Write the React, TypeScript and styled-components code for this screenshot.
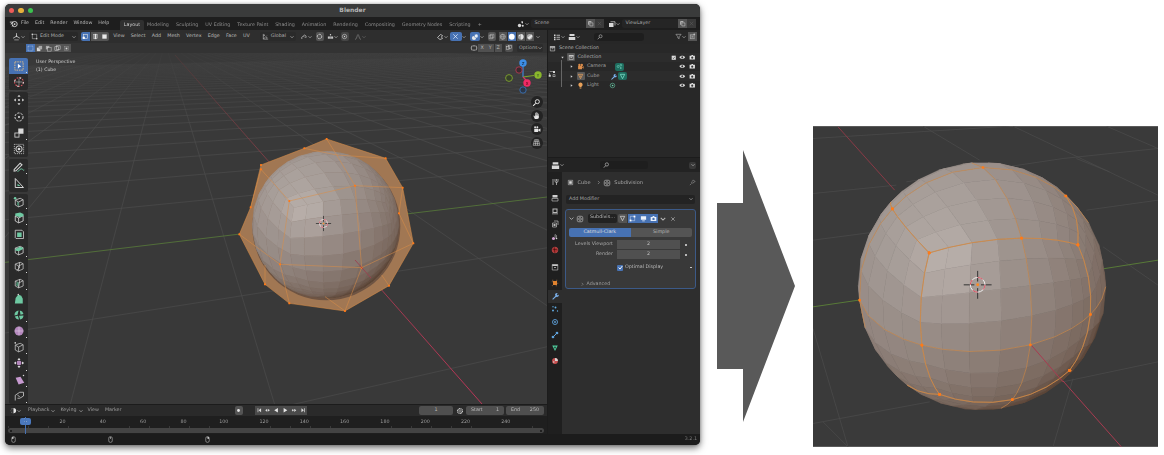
import React from "react";
import styled, { createGlobalStyle } from "styled-components";

const Global = createGlobalStyle`
  html, body { margin: 0; padding: 0; background: #fff; }
  #root { width: 1164px; height: 455px; overflow: hidden; }
  * { box-sizing: border-box; }
`;

/* ---------- page ---------- */
const Page = styled.div`
  display: flex; align-items: flex-start; width: 1164px; height: 455px; overflow: hidden;
  padding: 4px 0 0 5px; background: #fff;
  font-family: "DejaVu Sans", "Liberation Sans", sans-serif; text-rendering: geometricPrecision;
`;
const Window = styled.div`
  flex: none; width: 695px; height: 441px; display: flex; flex-direction: column; overflow: hidden;
  background: #1c1c1c; border-radius: 5px; box-shadow: 0 3px 7px rgba(0,0,0,.55), 0 0 3px rgba(0,0,0,.25);
  filter: blur(.38px); font-size: 4.8px; color: #bcbcbc; white-space: nowrap;
`;
const ArrowBox = styled.svg` flex: none; width: 78px; height: 272px; margin: 146px 0 0 17px; display: block; `;
const Picture = styled.svg` flex: none; width: 345px; height: 321px; margin: 122px 0 0 18px; display: block; filter: blur(.25px); `;

/* ---------- title + topbar ---------- */
const TitleBar = styled.div`
  flex: none; height: 13px; background: #3a3b3b; display: grid; grid-template-columns: 60px 1fr 60px; align-items: center;
`;
const Lights = styled.div` display: flex; gap: 4px; padding-left: 4px; `;
const Light = styled.span<{ $c: string }>` width: 5.4px; height: 5.4px; border-radius: 50%; background: ${p => p.$c}; `;
const Title = styled.div` text-align: center; font-size: 6px; font-weight: 700; color: #b5b5b5; `;
const TopBar = styled.div` flex: none; height: 13px; background: #1e1e1e; display: flex; align-items: center; padding-left: 4px; position: relative; `;
const MenuRow = styled.div<{ $gap: number; $ml?: number }>` display: flex; align-items: center; gap: ${p => p.$gap}px; margin-left: ${p => p.$ml ?? 0}px; `;
const Tabs = styled.div` display: flex; align-items: stretch; height: 10px; margin: 3px 0 0 11px; align-self: flex-start; `;
const Tab = styled.div<{ $on?: boolean }>`
  padding: 0 3.5px; display: flex; align-items: center; border-radius: 2px 2px 0 0; color: ${p => p.$on ? "#d0d0d0" : "#8e8e8e"}; background: ${p => p.$on ? "#303030" : "transparent"};
`;
const Spacer = styled.div` flex: 1; `;
const SceneField = styled.div<{ $w: number }>`
  width: ${p => p.$w}px; height: 9px; background: #252525; border-radius: 2px 0 0 2px; padding-left: 3.5px; display: flex; align-items: center; color: #a8a8a8;
`;
const SquareBtn = styled.div<{ $bg?: string; $w?: number; $h?: number; $r?: string }>`
  flex: none; width: ${p => p.$w ?? 9}px; height: ${p => p.$h ?? 9}px; background: ${p => p.$bg ?? "#545454"}; border-radius: ${p => p.$r ?? "0"};
  display: flex; align-items: center; justify-content: center;
`;
const Cluster = styled.div<{ $ml?: number; $gap?: number; $mr?: number }>`
  display: flex; align-items: center; gap: ${p => p.$gap ?? 0}px; margin-left: ${p => p.$ml ?? 0}px; margin-right: ${p => p.$mr ?? 0}px;
`;

/* ---------- main ---------- */
const Main = styled.div` flex: 1; min-height: 0; display: flex; gap: 1px; `;
const LeftCol = styled.div` width: 542px; display: flex; flex-direction: column; gap: 1px; `;
const RightCol = styled.div` flex: 1; display: flex; flex-direction: column; gap: 1px; `;
const Viewport = styled.div` flex: 1; position: relative; display: flex; flex-direction: column; background: #393939; overflow: hidden; `;
const SceneSvg = styled.svg` position: absolute; inset: 0; width: 542px; height: 374px; display: block; `;
const Bar = styled.div<{ $h: number; $bg: string }>`
  position: relative; flex: none; height: ${p => p.$h}px; background: ${p => p.$bg}; display: flex; align-items: center;
`;
const Drop = styled.div<{ $w: number; $ml?: number; $bg?: string }>`
  flex: none; width: ${p => p.$w}px; height: 9px; margin-left: ${p => p.$ml ?? 0}px; background: ${p => p.$bg ?? "#282828"}; border-radius: 2px;
  display: flex; align-items: center; gap: 2px; padding: 0 2px; color: #b0b0b0;
`;
const DropText = styled.span` flex: 1; `;
const Stage = styled.div` position: relative; flex: 1; display: flex; padding: 5px 4px 0 4px; min-height: 0; `;
const Tools = styled.div` flex: none; width: 19px; display: flex; flex-direction: column; gap: 2px; `;
const ToolGroup = styled.div` display: flex; flex-direction: column; border-radius: 2px; overflow: hidden; `;
const Tool = styled.div<{ $on?: boolean }>`
  height: 16.2px; background: ${p => p.$on ? "#4772b3" : "#2a2a2a"}; display: flex; align-items: center; justify-content: center; position: relative;
`;
const Corner = styled.span` position: absolute; right: 1px; bottom: 1px; width: 1px; height: 1px; background: #ddd; `;
const Info = styled.div` margin: 1px 0 0 8px; line-height: 8px; color: #cfcfcf; font-size: 4.7px; `;
const NavCol = styled.div`
  margin: 38px -1px 0 auto; width: 15px; display: flex; flex-direction: column; align-items: center; gap: 1.6px;
`;
const NavBtn = styled.div` width: 12px; height: 12px; border-radius: 50%; background: #232323; display: flex; align-items: center; justify-content: center; `;
const OptionsBtn = styled.div` flex: none; width: 26px; height: 8.5px; background: #2c2c2c; border-radius: 2px; display: flex; align-items: center; justify-content: space-between; padding: 0 2px 0 2px; color: #a8a8a8; `;

/* ---------- timeline ---------- */
const Timeline = styled.div` flex: none; height: 29px; display: flex; flex-direction: column; background: #1f1f1f; position: relative; overflow: hidden; `;
const TimeHead = styled.div` flex: none; height: 11px; background: #2a2a2a; display: flex; align-items: center; padding-left: 5px; color: #9e9e9e; `;
const TimeField = styled.div<{ $w: number; $ml?: number; $split?: boolean }>`
  flex: none; width: ${p => p.$w}px; height: 8.5px; background: #4f4f4f; border-radius: 2px; margin-left: ${p => p.$ml ?? 0}px; padding: 0 5px; display: flex; align-items: center;
  justify-content: ${p => p.$split ? "space-between" : "center"}; color: #bbb;
`;
const Ruler = styled.div`
  flex: none; height: 12px; display: flex; padding: 4px 0 0 37.4px; position: relative; color: #9c9c9c; align-items: flex-start;
  background: repeating-linear-gradient(90deg, #3a3a3a 0, #3a3a3a .7px, transparent .7px, transparent 20.15px) 3.4px 100% / 100% 2px no-repeat;
`;
const Mark = styled.div` flex: none; width: 40.3px; text-align: center; `;
const Handle = styled.div`
  position: absolute; left: 15px; top: 1.5px; width: 11px; height: 7.5px; border-radius: 2px; background: #4a78bd; color: #e4e4e4; text-align: center; line-height: 7.5px;
`;
const Playhead = styled.div` position: absolute; left: 20px; top: 12px; width: 1px; height: 17px; background: #4772b3; `;
const Scrollbar = styled.div` flex: none; height: 5px; margin: 0 3px; background: #444; border-radius: 3px; display: flex; align-items: center; justify-content: space-between; padding: 0 2px; `;
const Pip = styled.span` width: 2px; height: 2px; border-radius: 50%; background: #151515; `;
const Status = styled.div` flex: none; height: 11px; display: flex; align-items: center; padding: 0 3px 0 4.5px; background: #1c1c1c; color: #7e7e7e; `;
const MouseGap = styled.div<{ $w: number }>` flex: none; width: ${p => p.$w}px; `;

/* ---------- outliner ---------- */
const Outliner = styled.div` flex: none; height: 127px; background: #282828; position: relative; `;
const OutHead = styled.div` height: 13.5px; background: #272727; display: flex; align-items: center; `;
const Search = styled.div<{ $w: number; $ml: number }>`
  flex: none; width: ${p => p.$w}px; margin-left: ${p => p.$ml}px; height: 8px; background: #1e1e1e; border-radius: 3px; display: flex; align-items: center; padding-left: 3px;
`;
const Row = styled.div<{ $level: number; $stripe?: boolean }>`
  height: 9.3px; display: flex; align-items: center; padding: 0 5px 0 ${p => p.$level * 9.5}px; background: ${p => p.$stripe ? "#2c2c2c" : "transparent"}; color: ${p => p.$level === 2 ? "#a0a0a0" : "#b2b2b2"};
`;
const RowSlot = styled.span` flex: none; width: 9px; display: flex; justify-content: center; align-items: center; `;
const RowLabel = styled.span` margin-left: 2px; `;
const TreeLine = styled.span` position: absolute; left: 13px; top: 30px; width: .7px; height: 27px; background: #666; `;
const ModeMark = styled.span` position: absolute; left: 0px; top: 40px; display: flex; `;

/* ---------- properties ---------- */
const Props = styled.div` flex: 1; display: flex; flex-direction: column; background: #2e2e2e; min-height: 0; `;
const PropHead = styled.div` flex: none; height: 14px; background: #232323; display: flex; align-items: center; `;
const PropBody = styled.div` flex: 1; display: flex; min-height: 0; `;
const TabCol = styled.div` flex: none; width: 14px; background: #1f1f1f; display: flex; flex-direction: column; align-items: center; padding-top: 3.5px; `;
const PropTab = styled.div<{ $on?: boolean; $gap?: number }>`
  width: 14px; height: 13px; margin-bottom: ${p => p.$gap ?? 0}px; display: flex; align-items: center; justify-content: center; background: ${p => p.$on ? "#2e2e2e" : "transparent"};
`;
const PropMain = styled.div` flex: 1; padding: 5px 4px 0 3px; display: flex; flex-direction: column; `;
const Crumb = styled.div` height: 9px; display: flex; align-items: center; gap: 2px; padding-left: 2px; margin-top: 1px; font-size: 5px; color: #a8a8a8; `;
const AddMod = styled.div` height: 8.5px; margin: 8px 1px 0 1px; background: #232323; border-radius: 2px; display: flex; align-items: center; justify-content: space-between; padding: 0 2px 0 3px; color: #a8a8a8; `;
const Panel = styled.div`
  margin-top: 5px; height: 80px; background: #393939; border: 1px solid #3c5a88; border-radius: 3px; padding: 4px 3px 0 3px; display: flex; flex-direction: column;
`;
const PanelHead = styled.div` height: 10px; display: flex; align-items: center; `;
const NameField = styled.div` width: 29px; height: 8.5px; margin-left: 4px; background: #222; border-radius: 2px; text-align: center; line-height: 8.5px; color: #bbb; `;
const Seg = styled.div` display: flex; height: 9px; margin-top: 4.5px; border-radius: 2px; overflow: hidden; `;
const SegBtn = styled.div<{ $on?: boolean }>` flex: 1; background: ${p => p.$on ? "#4772b3" : "#545454"}; color: ${p => p.$on ? "#ddd" : "#b5b5b5"}; text-align: center; line-height: 9px; `;
const FieldRow = styled.div<{ $mt?: number }>` height: 9.3px; margin-top: ${p => p.$mt ?? .8}px; display: flex; align-items: center; `;
const FieldLabel = styled.div` width: 44px; text-align: right; padding-right: 0; color: #a8a8a8; `;
const Num = styled.div` width: 63px; height: 9.3px; margin-left: 4px; background: #505050; text-align: center; line-height: 9.3px; color: #c0c0c0; `;
const Dot = styled.span` flex: none; width: 1.8px; height: 1.8px; border-radius: 50%; background: #ddd; margin-left: 5px; `;
const Check = styled.span` flex: none; width: 6px; height: 6px; border-radius: 1px; background: #4772b3; margin-left: 48px; display: flex; align-items: center; justify-content: center; `;
const CheckLabel = styled.span` margin-left: 2px; color: #b8b8b8; flex: 1; `;
const Advanced = styled.div` margin-top: 9.5px; display: flex; align-items: center; gap: 2px; padding-left: 11px; color: #9f9f9f; `;

/* ---------- icon drawings ---------- */
const G = "#6ec9a2";
const W = "#d8d8d8";
const cube = "M3 5.5 9.5 3 13.5 5v7L7.5 14.5 3 12Z M3 5.5 7.5 8 13.5 5 M7.5 8v6.5";
const S = (d: string, c = W, w = 1.2, extra: object = {}) => <path d={d} fill="none" stroke={c} strokeWidth={w} {...extra} />;
const F = (d: string, c = W) => <path d={d} fill={c} />;

const ICONS: Record<string, React.ReactNode> = {
  select: <>{<rect x="2.5" y="2.5" width="11" height="11" fill="none" stroke="#d9b98a" strokeWidth="1.3" strokeDasharray="2 1.2" />}{F("M6.5 5v6.5l1.8-1.7L11 8.5Z", "#fff")}</>,
  cursor: <><circle cx="8" cy="8" r="5.8" fill="none" stroke="#e0555f" strokeWidth="1.4" strokeDasharray="2.3 1.6" /><circle cx="8" cy="8" r="5.8" fill="none" stroke="#ddd" strokeWidth="1.4" strokeDasharray="2.3 6.8" />{S("M8 3.5v9M3.5 8h9", "#aaa", .9)}</>,
  move: <>{F("M8 1 10 3.8H6Z M8 15 10 12.2H6Z M1 8 3.8 6V10Z M15 8 12.2 6V10Z")}<circle cx="8" cy="8" r="1.3" fill={W} /></>,
  rotate: <><circle cx="8" cy="8" r="5.4" fill="none" stroke={W} strokeWidth="1.3" strokeDasharray="3 1.5" /><circle cx="8" cy="8" r="1.4" fill={W} /></>,
  scale: <>{F("M7 2h7v7H7Z")}<rect x="2.5" y="8" width="5.5" height="5.5" fill="#2a2a2a" stroke={W} strokeWidth="1.1" /></>,
  transform: <><rect x="1.8" y="1.8" width="12.4" height="12.4" fill="none" stroke={W} strokeWidth="1" strokeDasharray="1.5 1.2" /><circle cx="8" cy="8" r="4.2" fill="none" stroke={W} strokeWidth="1.3" /><circle cx="8" cy="8" r="1.8" fill={W} /></>,
  annotate: <>{S("M1.5 11.5 9.5 3l2.5 2-8 8-2.5.5Z", W, 1.4)}{S("M6 14c2.5 0 2.5-3.5 5-3.5S13 13 15 12", G, 1.3)}</>,
  measure: <>{S("M3 2v12h11L3 2Z", W, 1.3)}{F("M6 9 6 12 10 12 Z", G)}</>,
  addcube: <>{S(cube, W, 1)}{F("M5.5 7.5 8 9v4.5L5.5 12Z", "#4c8a70")}<circle cx="2.8" cy="3" r="1.7" fill={G} /></>,
  extrude: <>{S(cube, W, 1.1)}{F("M3 2 9.5 .6 14 2.6v2.6L9 7 3 5Z", G)}</>,
  inset: <>{S("M3 3h9l2 2v9H4l-1-1Z", W, 1)}{F("M5.5 6h6v6h-6Z", G)}</>,
  bevel: <>{S(cube, W, 1)}{F("M3 7 9 3.5 13.5 5 13 7 7.5 9.5 3 8.5Z", G)}</>,
  loop: <>{S(cube, W, .9)}{S("M8.5 3.2v7.5L5 14", W, 1)}</>,
  knife: <>{S(cube, W, .9)}{F("M5 5.5 8 7.5 7 13 4 11Z", "#4c8a70")}{S("M9 3 7.5 14", W, 1)}</>,
  poly: <>{F("M7 2 11 3.5 13 7.5V14H2.5l1-7.5Z", G)}<circle cx="7" cy="2" r="1" fill={W} /></>,
  spin: <>{F("M7.5 2A6 6 0 0 0 2 8.5l4-1Z M9 2a6 6 0 0 1 5 4.5l-4 1Z M14 8.5A6 6 0 0 1 9.5 14L8 9Z M8 14A6 6 0 0 1 2.5 10L6.5 9Z", G)}</>,
  smooth: <><circle cx="8" cy="8" r="6" fill="#b487bd" />{S("M2 8h12M8 2v12", "#e5d2e8", .7)}</>,
  slide: <>{S(cube, W, .9)}<circle cx="3" cy="2.5" r="1.1" fill={W} /></>,
  shrink: <>{F("M8 1 10 4H6Z M8 15 10 12H6Z M1 8 4 6V10Z M15 8 12 6V10Z")}<circle cx="8" cy="8" r="3.2" fill="#b487bd" /></>,
  shear: <>{F("M3.5 5 10 3.5 15 11.5 7.5 14Z", "#c79ad0")}<circle cx="14" cy="2" r="1" fill={W} /></>,
  rip: <>{S("M3 14V7L9 3h5v5l-5 3H6", W, 1)}{S("M6 7 9 9", W, 1)}</>,
  blender: <><circle cx="10" cy="9" r="4.6" fill="none" stroke={W} strokeWidth="1.6" /><circle cx="10" cy="9" r="1.6" fill={W} />{S("M1.5 5.5h6M3 9l4-3M5 13 8 11", W, 1.5)}</>,
  axes: <>{S("M2 11 8 7.5 14 11M8 7.5V2", W, 1.3)}<circle cx="8" cy="7.5" r="1.4" fill={W} />{S("M4 14h8", W, 1)}</>,
  editmode: <>{S("M3 3h10v10H3Z", W, 1.1)}<rect x="1.5" y="1.5" width="3" height="3" fill={W} /><rect x="11.5" y="11.5" width="3" height="3" fill={W} /></>,
  vertex: <><rect x="3" y="3" width="10" height="10" fill="none" stroke="#e8e8e8" strokeWidth="1.3" /><rect x="1.5" y="8.5" width="5" height="5" fill="#fff" /></>,
  edge: <><rect x="3" y="3" width="10" height="10" fill="none" stroke="#cfcfcf" strokeWidth="1.1" /><rect x="6" y="2" width="4" height="12" fill="#e8e8e8" /></>,
  face: <>{F("M3 3h10v10H3Z", "#e8e8e8")}{S("M3 3h10", "#888", 1)}</>,
  sel2: <><rect x="2.5" y="2.5" width="11" height="11" fill="none" stroke="#e6eef9" strokeWidth="1" strokeDasharray="2 1" /></>,
  sel3: <>{F("M2 6h8v8H2Z")}{F("M6 2h8v8H6Z", "#aaa")}</>,
  sel4: <>{F("M2 2h8v8H2Z", "#aaa")}<rect x="6" y="6" width="8" height="8" fill="#555" stroke={W} strokeWidth="1" /></>,
  sel5: <><rect x="2" y="4" width="8" height="8" fill="none" stroke={W} strokeWidth="1.2" /><rect x="6" y="2" width="8" height="8" fill="none" stroke={W} strokeWidth="1.2" /></>,
  sel6: <><rect x="3" y="3" width="10" height="10" fill="none" stroke="#999" strokeWidth="1" /><rect x="6" y="6" width="4" height="4" fill={W} /></>,
  global: <>{S("M3 2v12h11", W, 1.2)}{S("M3 14 11 6", W, 1.1)}<circle cx="5" cy="5" r="1.3" fill={W} /><circle cx="11" cy="11" r="1.3" fill={W} /></>,
  link: <>{S("M4 12a3 3 0 1 1 5-4M7 5a3 3 0 1 1 4 5", W, 1.3)}</>,
  magnet: <><circle cx="8" cy="8" r="5" fill="none" stroke={W} strokeWidth="2" strokeDasharray="5 1.5" /></>,
  snapgrid: <>{F("M2 8h12v5H2Z")}{S("M5 8v5M8 8v5M11 8v5", "#333", .8)}<circle cx="8" cy="4" r="1.6" fill={W} /></>,
  circleDot: <><circle cx="8" cy="8" r="5" fill="none" stroke={W} strokeWidth="1.3" /><circle cx="8" cy="8" r="1.5" fill={W} /></>,
  curve: <>{S("M2 13C6 13 6 3 8 3s2 10 6 10", "#8a8a8a", 1.2)}</>,
  cursorSm: <>{S("M3 9 9 3l4 2-2 3 2 3-5 2Z", W, 1.5)}</>,
  gizmoToggle: <>{S("M3 13 13 3M3 3l10 10", "#e8f0ff", 1.6)}</>,
  overlay: <><circle cx="6" cy="10" r="4.2" fill="#e8e8e8" /><circle cx="10.5" cy="6" r="3.8" fill="#e8f0fb" stroke="#4772b3" strokeWidth="1" /></>,
  xray: <>{S("M2.5 5h8v8h-8Z M5.5 3h8v8h-8Z", "#d0d0d0", 1)}</>,
  wire: <><circle cx="8" cy="8" r="5.5" fill="none" stroke="#dcdcdc" strokeWidth="1" />{S("M2.5 8h11M8 2.5c-3 3-3 8 0 11M8 2.5c3 3 3 8 0 11", "#dcdcdc", .8)}</>,
  solid: <circle cx="8" cy="8" r="6.2" fill="#fff" />,
  material: <><circle cx="8" cy="8" r="6" fill="#9c9c9c" /><path d="M8 2a6 6 0 0 1 0 12Z" fill="#e0e0e0" /><circle cx="5.5" cy="5.5" r="1.5" fill="#eee" /></>,
  rendered: <><circle cx="8" cy="8" r="6" fill="#a8a8a8" /><path d="M3 10 12 3 14 7 7 14Z" fill="#e4e4e4" /></>,
  cameraview: <>{S("M3 4h10v8H3Z", W, 1)}{S("M8 2v2M8 12v2M1 8h2M13 8h2", W, 1)}</>,
  zoom: <><circle cx="9.5" cy="6.5" r="3.6" fill="none" stroke="#eee" strokeWidth="1.6" />{S("M6.5 9.5 2 14", "#eee", 1.8)}</>,
  hand: <>{F("M5 14 2.5 8.5l1.2-.6L5.5 10V3.2h1.1V8h.8V2.2h1.1V8h.8V3h1.1v5.3h.8V5h1v6c0 2-1 3-3 3Z", "#e6e6e6")}</>,
  camera: <>{F("M4 6.5h7v6H4Z M11.5 8 15 6v6l-3.5-2Z", "#e6e6e6")}<circle cx="5.5" cy="4" r="1.7" fill="#e6e6e6" /><circle cx="9.5" cy="4" r="1.7" fill="#e6e6e6" /></>,
  gridv: <>{S("M4.5 3h7l2.500 10h-12Z M7 3 6 13M9 3l1 10M3.800 6.500h8.400M3 10h10", "#e6e6e6", .9)}</>,
  mode: <>{S("M3 11V6M3 3h7", W, 1)}<rect x="1.5" y="9.5" width="4" height="4" fill={W} /><rect x="10" y="2" width="4" height="4" fill={W} /><rect x="10" y="9.5" width="4" height="4" fill="none" stroke={W} strokeWidth="1" /></>,
  outlinerEd: <>{F("M2 3h3v3H2Z")}{S("M7 4.5h7M7 8.5h7M7 12.5h7", W, 1.6)}{F("M2 7.5h3v3H2Z M2 11.5h3v3H2Z")}</>,
  displayEd: <>{F("M3 2h10v4H3Z M1.5 8h13v6h-13Z")}</>,
  searchI: <><circle cx="9.5" cy="6" r="4" fill="none" stroke="#c8c8c8" strokeWidth="1.5" />{S("M6.5 9 2 14", "#c8c8c8", 1.7)}</>,
  filter: <>{S("M2 3h12L9.5 8.5V13l-3-1.5v-3Z", "#c8c8c8", 1.2)}</>,
  newCol: <>{F("M2 3h11v11H2Z", "#9a9a9a")}{S("M5 6h6v5H5Z", "#3a3a3a", 1)}{S("M12 1v4M10 3h4", "#eee", 1.1)}</>,
  coll: <>{F("M2 3h12v3H2Z", "#e3e3e3")}{S("M3 6v7.5h10V6", "#e3e3e3", 1.2)}{F("M6 8h4v1.5H6Z", "#e3e3e3")}</>,
  cam: <><circle cx="5.5" cy="4.5" r="2.7" fill="#d98c4a" /><circle cx="11" cy="4.5" r="2.7" fill="#d98c4a" />{F("M2.5 7h9v7h-9Z M12 9l3-2v6l-3-2Z", "#d98c4a")}</>,
  tri: <>{S("M3 3 13 3 8 13Z", "#e8a15a", 1.7)}<circle cx="8" cy="7" r="1.4" fill="#e8a15a" /></>,
  bulb: <>{F("M8 1a4.8 4.8 0 0 0-2.4 9v2h4.8v-2A4.8 4.8 0 0 0 8 1Z M6 13h4v1.6H6Z", "#e8a15a")}</>,
  teal: <><circle cx="5" cy="8" r="2.3" fill="none" stroke="#7ee0c8" strokeWidth="1.2" /><circle cx="11" cy="5" r="2" fill="none" stroke="#7ee0c8" strokeWidth="1.2" /><circle cx="11" cy="11.5" r="1.8" fill="#7ee0c8" /></>,
  tealTri: <>{S("M3 3 13 3 8 13Z", "#7ee0c8", 1.8)}</>,
  wrenchB: <>{F("M2.5 14 9 7.5A3.2 3.2 0 0 1 13.5 3L11.5 5l1 1.5 1.6.2 1.3-1.6A3.6 3.6 0 0 1 10.5 9.5L4 15.5Z", "#7ab2ef")}</>,
  wrench: <>{F("M2.5 14 9 7.5A3.2 3.2 0 0 1 13.5 3L11.5 5l1 1.5 1.6.2 1.3-1.6A3.6 3.6 0 0 1 10.5 9.5L4 15.5Z", "#7aaee8")}</>,
  sun: <><circle cx="8" cy="8" r="5.2" fill="none" stroke="#6ed9b3" strokeWidth="1.2" /><path d="M6.5 5.5 11 8 6.5 10.5Z" fill="#6ed9b3" /></>,
  eye: <>{F("M1 8c3-5 11-5 14 0-3 5-11 5-14 0Z", "#e0e0e0")}<circle cx="8" cy="8" r="2.4" fill="#333" /></>,
  rcam: <>{F("M1.5 4.5h4l1-2h3l1 2h4v9h-13Z", "#e4e4e4")}<circle cx="8" cy="9" r="2.7" fill="#333" /></>,
  checked: <>{F("M2 2h12v12H2Z", "#dedede")}{S("M4.5 8 7 10.5 11.5 5", "#222", 1.6)}</>,
  tool: <>{S("M4 2v12M11 2v5M8 2v4a3 3 0 0 0 6 0V2M11 8v6", "#cfcfcf", 1.4)}</>,
  render: <>{F("M3 2h10v5H3Z", "#cfcfcf")}{S("M2 9h12v5H2Z", "#cfcfcf", 1.2)}</>,
  output: <>{F("M3 3h10v9H3Z", "#bbb")}{F("M5 5h6v5H5Z", "#222")}{F("M2 13h12v1.5H2Z", "#bbb")}</>,
  vlayer: <>{S("M3 6h8v8H3Z M6 2h8v8", "#bbb", 1.4)}{F("M5 8h4v4H5Z", "#bbb")}</>,
  scene: <><circle cx="5" cy="11" r="3" fill="#cfa3d0" />{S("M8 3l3 2v4l-3-1Z", "#d5d5d5", 1)}<circle cx="11" cy="11" r="1.6" fill="#d5d5d5" /></>,
  world: <><circle cx="8" cy="8" r="5.8" fill="#a33" stroke="#d85a5a" strokeWidth="1" />{S("M3 6c3 2 7 0 10 2M6 2c2 3 0 8 2 12", "#300", 1)}</>,
  collTab: <>{S("M2.5 3h11v11h-11Z", "#c8c8c8", 1.2)}{F("M2.5 3h11v3h-11Z M6 8h4v1.5H6Z", "#c8c8c8")}</>,
  object: <>{F("M4 4h8v8H4Z", "#e0822e")}{S("M2.5 2.5h11v11h-11Z", "#e8a060", 1.1, { strokeDasharray: "2 6" })}</>,
  particle: <><circle cx="4" cy="11" r="1.9" fill="#63b0e8" /><circle cx="9" cy="5" r="1.9" fill="#63b0e8" /><circle cx="13" cy="12" r="1.4" fill="#63b0e8" /><circle cx="4" cy="3.5" r="1.3" fill="#63b0e8" /></>,
  physics: <><circle cx="8" cy="8" r="5" fill="none" stroke="#5fa3dd" strokeWidth="1.8" /><circle cx="8" cy="8" r="1.8" fill="#5fa3dd" /></>,
  constraint: <>{S("M3 13 13 3", "#5fa3dd", 2)}<circle cx="4" cy="12" r="2.7" fill="#5fa3dd" /><circle cx="12" cy="4" r="2.7" fill="#5fa3dd" /></>,
  dataTab: <>{F("M2.5 3h11L8 14Z", "#4fd09f")}<path d="M6 5.5h4L8 10Z" fill="#1f1f1f" /></>,
  materialTab: <><circle cx="8" cy="8" r="5.8" fill="#c85050" /><path d="M8 2.2A5.8 5.8 0 0 1 13.8 8H8Z" fill="#d7d7d7" /><circle cx="5.5" cy="10" r="1.5" fill="#d7d7d7" /></>,
  pin: <>{S("M10 2l4 4-3 1-2.5 3-3-3L8.5 4.500Z M6 10l-4 4", "#a5a5a5", 1.2)}</>,
  subsurf: <><rect x="2.5" y="2.5" width="11" height="11" rx="3" fill="none" stroke="#d0d0d0" strokeWidth="1.2" /><circle cx="8" cy="8" r="2.7" fill="none" stroke="#d0d0d0" strokeWidth="1.2" /></>,
  cubeSel: <>{S("M3 3h10v10H3Z", "#d8d8d8", 1.2)}<rect x="5" y="5" width="6" height="6" fill="#d8d8d8" /></>,
  triDown: <>{S("M3 3h10L8 13Z", "#dcdcdc", 1.6)}</>,
  editCage: <>{S("M3 3h10v10H3Z", "#e8f0fb", 1)}<rect x="1.5" y="10.5" width="4" height="4" fill="#fff" /><rect x="10.5" y="1.5" width="4" height="4" fill="#fff" /></>,
  screen: <>{F("M2 3h12v8H2Z M5 12.5h6V14H5Z", "#eaf1fb")}</>,
  camBlue: <>{F("M1.5 4.500h4l1-2h3l1 2h4v9h-13Z", "#eaf1fb")}<circle cx="8" cy="9" r="2.7" fill="#4772b3" /></>,
  close: <>{S("M3.5 3.5l9 9M12.500 3.500l-9 9", "#cfcfcf", 1.5)}</>,
  clock: <><circle cx="8" cy="8" r="5" fill="none" stroke="#cfcfcf" strokeWidth="2.2" strokeDasharray="2 1" /><circle cx="8" cy="8" r="2.4" fill="none" stroke="#cfcfcf" strokeWidth="1.2" /></>,
  clockHead: <><circle cx="8" cy="8" r="6" fill="#e8e8e8" /><path d="M8 2a6 6 0 0 0 0 12Z" fill="#333" /></>,
  rec: <circle cx="8" cy="8" r="3.2" fill="#e8e8e8" />,
  first: <>{F("M4 3h1.700v10H4Z M12.500 3v10L6.500 8Z", "#dcdcdc")}</>,
  prevKey: <>{F("M8 4v8L3 8Z M9 8l2.500-2.800L14 8l-2.500 2.800Z", "#dcdcdc")}</>,
  play: <>{F("M4 2.500 13 8 4 13.500Z", "#e8e8e8")}</>,
  playBack: <>{F("M12 2.500 3 8 12 13.500Z", "#e8e8e8")}</>,
  nextKey: <>{F("M8 4v8l5-4Z M7 8 4.500 5.200 2 8l2.500 2.800Z", "#dcdcdc")}</>,
  last: <>{F("M12 3h-1.700v10H12Z M3.500 3v10L9.500 8Z", "#dcdcdc")}</>,
  mouse: <><rect x="4" y="1.500" width="8" height="13" rx="3.500" fill="none" stroke="#cfcfcf" strokeWidth="1.200" /><path d="M4.500 6h3.500V2A3.500 3.500 0 0 0 4.500 5Z" fill="#e6e6e6" /></>,
  mouseMid: <><rect x="4" y="1.500" width="8" height="13" rx="3.500" fill="none" stroke="#cfcfcf" strokeWidth="1.200" /><rect x="7.300" y="2.500" width="1.400" height="4" fill="#e6e6e6" /></>,
  mouseR: <><rect x="4" y="1.500" width="8" height="13" rx="3.500" fill="none" stroke="#cfcfcf" strokeWidth="1.200" /><path d="M11.500 6H8V2a3.500 3.500 0 0 1 3.500 3Z" fill="#e6e6e6" /></>,
  sceneIcon: <>{F("M9 2v4l3 1V3Z", W)}<circle cx="5" cy="11" r="3.300" fill={W} /><circle cx="11.500" cy="11.500" r="2" fill={W} /></>,
  viewIcon: <>{F("M2 6h9v8H2Z", W)}{S("M5 3.500h9V11", W, 1.400)}</>,
  copy: <>{F("M3 3h7v2H5v6H3Z", "#cfcfcf")}{S("M6.500 6.500h7v7h-7Z", "#cfcfcf", 1.200)}</>,
  xDim: <>{S("M4 4l8 8M12 4l-8 8", "#5c5c5c", 1.200)}</>,
  chevR: <>{S("M6 3l5 5-5 5", "#b0b0b0", 1.700)}</>,
  arrowR: <>{F("M5.500 4l6 4-6 4Z", "#cfcfcf")}</>,
  arrowD: <>{F("M4 5.500h8L8 11.500Z", "#cfcfcf")}</>,
};

const Ic = ({ n, s = 8 }: { n: string; s?: number }) => (
  <svg width={s} height={s} viewBox="0 0 16 16" style={{ flex: "none", display: "block" }}>{ICONS[n]}</svg>
);
const Chev = ({ c = "#b5b5b5", s = 4 }: { c?: string; s?: number }) => (
  <svg width={s} height={s} viewBox="0 0 8 8" style={{ flex: "none", display: "block" }}><path d="M1 2.500 4 5.500 7 2.500" fill="none" stroke={c} strokeWidth="1.400" /></svg>
);

/* ---------- scene geometry ---------- */
type V = [number, number, number];
const add = (a: V, b: V, s = 1): V => [a[0] + b[0] * s, a[1] + b[1] * s, a[2] + b[2] * s];
const norm = (a: V): V => { const l = Math.hypot(...a) || 1; return [a[0] / l, a[1] / l, a[2] / l]; };
const dot = (a: V, b: V) => a[0] * b[0] + a[1] * b[1] + a[2] * b[2];
const dir = (x: number, y: number): V => { const z = Math.sqrt(Math.max(.01, 1 - x * x - y * y)); return norm([x, y, z]); };
const lerp = (a: number, b: number, t: number) => a + (b - a) * t;

const SHADE: [number, number, number, number][] = [
  [-.6, 92, 70, 56], [-.3, 120, 102, 92], [.5, 150, 138, 132], [.8, 160, 150, 145], [1, 170, 161, 156],
];
function shade(l: number, spec: number) {
  let i = 0;
  while (i < SHADE.length - 2 && l > SHADE[i + 1][0]) i++;
  const A = SHADE[i], B = SHADE[i + 1], t = Math.min(1, Math.max(0, (l - A[0]) / (B[0] - A[0])));
  return `rgb(${[1, 2, 3].map(k => Math.min(255, Math.round(lerp(A[k], B[k], t) + spec))).join(",")})`;
}

// A subdivided cube projected on a sphere: a, b, c are the three visible face centres.
function ball(cx: number, cy: number, r: number, a: V, b: V, c: V, sw: number) {
  const N = 8;
  const L = norm([-.45, -.55, .7]), L2 = norm([-.26, -.16, .95]);
  const P = (v: V) => `${(cx + v[0] * r).toFixed(1)} ${(cy + v[1] * r).toFixed(1)}`;
  const pt = (s: number, t: number, u: number): V => norm(add(add([a[0] * s, a[1] * s, a[2] * s], b, t), c, u));
  const map = (ax: number, sg: number, i: number, j: number): V => {
    const p = -1 + 2 * i / N, q = -1 + 2 * j / N;
    return ax === 0 ? pt(sg, p, q) : ax === 1 ? pt(p, sg, q) : pt(p, q, sg);
  };
  const quads: { d: string; f: string; z: number }[] = [];
  let edges = "";
  const verts: V[] = [];
  for (const ax of [0, 1, 2]) for (const sg of [-1, 1]) {
    for (let i = 0; i < N; i++) for (let j = 0; j < N; j++) {
      const q = [map(ax, sg, i, j), map(ax, sg, i + 1, j), map(ax, sg, i + 1, j + 1), map(ax, sg, i, j + 1)];
      const n = norm(q.reduce((acc, v) => add(acc, v), [0, 0, 0] as V));
      if (n[2] < -.08) continue;
      const spec = Math.pow(Math.max(0, dot(n, L2)), 18) * 20;
      quads.push({ d: "M" + q.map(P).join("L") + "Z", f: shade(dot(n, L), spec), z: n[2] });
    }
    for (const k of [0, 4, 8]) for (let i = 0; i < N; i++) {
      const A = map(ax, sg, i, k), B = map(ax, sg, i + 1, k), C = map(ax, sg, k, i), D = map(ax, sg, k, i + 1);
      if (A[2] > 0 && B[2] > 0) edges += `M${P(A)}L${P(B)}`;
      if (C[2] > 0 && D[2] > 0) edges += `M${P(C)}L${P(D)}`;
    }
    for (const i of [0, 4, 8]) for (const j of [0, 4, 8]) { const v = map(ax, sg, i, j); if (v[2] > 0) verts.push(v); }
  }
  quads.sort((p, q) => p.z - q.z);
  return {
    faces: quads.map((o, i) => <path key={i} d={o.d} fill={o.f} stroke={o.f} strokeWidth={sw} />),
    edges,
    verts: verts.map(v => [cx + v[0] * r, cy + v[1] * r]),
  };
}

// perspective ground grid for the main viewport, measured on the axes of the scene
function groundLines() {
  const O = [323.8, 224], V1 = [165, 42], V2 = [1964, 25], k1 = .2215, k2 = .0575;
  const out: number[][] = [];
  for (let u = -4; u <= 34; u += 1) {
    if (u === 0) continue;
    const w = 1 + u * k1, x = (O[0] + u * k1 * V1[0]) / w, y = (O[1] + u * k1 * V1[1]) / w;
    out.push([V2[0], V2[1], V2[0] + (x - V2[0]) * 3, V2[1] + (y - V2[1]) * 3]);
  }
  for (let v = -12; v <= 34; v += 1) {
    if (v === 0) continue;
    const w = 1 + v * k2, x = (O[0] + v * k2 * V2[0]) / w, y = (O[1] + v * k2 * V2[1]) / w;
    const e = 30;
    out.push([V1[0], V1[1], V1[0] + (x - V1[0]) * e, V1[1] + (y - V1[1]) * e]);
  }
  return out;
}

const cagePoly = "108,120 238,70 305,42 482,100 533,188 565,355 492,482 360,558 193,535 120,478 43,328 77,247";
const cageLines = [
  "108,120 238,70 305,42 482,100 533,188 565,355 492,482 360,558 193,535 120,478 43,328 77,247 108,120",
  "193,228 390,182 410,428 165,418 193,228", "193,228 108,133", "390,182 335,90 305,42", "390,182 533,188",
  "410,428 565,355", "410,428 360,558", "165,418 43,328", "165,418 193,535", "238,70 335,90 482,100",
  "77,247 108,133", "522,265 533,188", "522,265 565,355", "120,478 120,420", "492,482 470,450", "300,515 360,558",
];
const cageVerts = [[108,120],[108,133],[238,70],[305,42],[482,100],[533,188],[522,265],[565,355],[492,482],[360,558],[193,535],[120,478],[43,328],[77,247],[193,228],[390,182],[410,428],[165,418]];

const Cursor3D = ({ x, y, r, w }: { x: number; y: number; r: number; w: number }) => (
  <g>
    <path d={`M${x} ${y - r * 1.9}V${y - r * .45}M${x} ${y + r * .45}V${y + r * 1.9}M${x - r * 1.9} ${y}H${x - r * .45}M${x + r * .45} ${y}H${x + r * 1.9}`} stroke="#333" strokeWidth={w} />
    <circle cx={x} cy={y} r={r} fill="none" stroke="#eee" strokeWidth={w} />
    <circle cx={x} cy={y} r={r} fill="none" stroke="#d8485a" strokeWidth={w} strokeDasharray={`${r * .7} ${r * .87}`} />
    <circle cx={x} cy={y} r={r * .2} fill="#ff8a1f" />
  </g>
);

const leftBall = ball(302, 299, 220, dir(.46, .56), dir(0, -.96), dir(-.99, .12), 1.2);
const rightBall = ball(517, 483, 372, dir(.39, .473), dir(.008, -.957), dir(-.987, .113), 1.5);

const Scene = () => (
  <SceneSvg viewBox="5 30 542 374">
    <defs>
      <linearGradient id="fade" gradientUnits="userSpaceOnUse" x1="0" y1="52" x2="0" y2="130">
        <stop offset="0" stopColor="#4b4b4b" stopOpacity=".15" />
        <stop offset="1" stopColor="#4b4b4b" stopOpacity="1" />
      </linearGradient>
      <linearGradient id="redA" gradientUnits="userSpaceOnUse" x1="175" y1="55" x2="482" y2="404">
        <stop offset="0" stopColor="#4c3a3a" /><stop offset=".35" stopColor="#8a3e48" /><stop offset="1" stopColor="#c8345a" />
      </linearGradient>
    </defs>
    {groundLines().map((l, i) => <line key={i} x1={l[0]} y1={l[1]} x2={l[2]} y2={l[3]} stroke="url(#fade)" strokeWidth=".7" />)}
    <line x1="0" y1="263" x2="547" y2="197" stroke="#55743a" strokeWidth=".9" />
    <line x1="175" y1="55" x2="482" y2="404" stroke="url(#redA)" strokeWidth=".9" />
    <g transform="translate(225 125) scale(.3333)">
      <polygon points={cagePoly} fill="#a17753" />
      <circle cx="304" cy="304" r="222" fill="#6e5443" />
      {leftBall.faces}
      {cageLines.map((p, i) => <polyline key={i} points={p} fill="none" stroke="#d98e46" strokeWidth="1.9" opacity=".85" />)}
      {cageVerts.map((v, i) => <rect key={i} x={v[0] - 3} y={v[1] - 3} width="6" height="6" rx="2" fill="#ff7a18" />)}
    </g>
    <line x1="355" y1="260" x2="371" y2="278" stroke="#9b4050" strokeWidth=".9" />
    <Cursor3D x={323.5} y={223.5} r={4} w={.8} />
    {/* navigation gizmo */}
    <line x1="523" y1="77" x2="523" y2="66" stroke="#3f85d8" strokeWidth="1.2" />
    <line x1="523" y1="77" x2="534" y2="75.500" stroke="#7fa52b" strokeWidth="1.2" />
    <line x1="523" y1="77" x2="526" y2="80" stroke="#d13a63" strokeWidth="1.2" />
    <circle cx="519" cy="70" r="3.200" fill="#3c2a30" stroke="#b03a50" strokeWidth=".9" />
    <circle cx="509" cy="78" r="3.400" fill="#36402a" stroke="#7a9a30" strokeWidth="1" />
    <circle cx="523" cy="90" r="3.200" fill="#2a3648" stroke="#3a6ca8" strokeWidth="1" />
    <circle cx="523" cy="63" r="3.700" fill="#3d8ee6" />
    <circle cx="538" cy="75" r="3.700" fill="#8ab72c" />
    <circle cx="527" cy="83" r="3.700" fill="#f02a66" />
    <text x="523" y="64.600" textAnchor="middle" fontSize="4" fill="#123" fontFamily="DejaVu Sans">Z</text>
    <text x="538" y="76.600" textAnchor="middle" fontSize="4" fill="#232" fontFamily="DejaVu Sans">Y</text>
    <text x="527" y="84.600" textAnchor="middle" fontSize="4" fill="#300" fontFamily="DejaVu Sans">X</text>
  </SceneSvg>
);

/* ---------- right picture ---------- */
const picGrid = [
  [10,40,600,3],[10,205,260,180],[10,345,200,320],[290,170,760,100],[760,100,1045,70],[830,255,1045,225],[10,895,360,830],
  [760,770,1045,710],[610,3,1045,210],[880,365,1045,480],[10,610,115,965],[340,3,510,105],[890,3,1045,70],[40,890,115,965],
  [800,100,900,140],[730,965,790,760],
];

const PicContent = () => (
  <>
    <rect x="10" y="3" width="1035" height="962" fill="#3a3a3a" />
    {picGrid.map((l, i) => <line key={i} x1={l[0]} y1={l[1]} x2={l[2]} y2={l[3]} stroke="#4d4d4d" strokeWidth="2" />)}
    <line x1="10" y1="545" x2="160" y2="523" stroke="#587a38" strokeWidth="3" />
    <line x1="880" y1="431" x2="1045" y2="405" stroke="#587a38" strokeWidth="3" />
    <line x1="85" y1="5" x2="255" y2="195" stroke="#8a3a46" strokeWidth="3" />
    <line x1="665" y1="660" x2="935" y2="965" stroke="#a83a50" strokeWidth="3" />
    {rightBall.faces}
    <path d={rightBall.edges} fill="none" stroke="#cf8a48" strokeWidth="1.900" />
    <line x1="665" y1="660" x2="760" y2="770" stroke="#a83a50" strokeWidth="3" />
    {rightBall.verts.map((v, i) => <rect key={i} x={v[0] - 4} y={v[1] - 4} width="8" height="8" rx="3" fill="#ff7a18" />)}
    <Cursor3D x={504} y={479} r={22} w={3} />
  </>
);

/* ---------- data ---------- */
const toolGroups: { n: string; on?: boolean; c?: boolean }[][] = [
  [{ n: "select", on: true, c: true }, { n: "cursor" }],
  [{ n: "move" }, { n: "rotate" }, { n: "scale", c: true }, { n: "transform" }],
  [{ n: "annotate", c: true }, { n: "measure" }],
  [{ n: "addcube", c: true }, { n: "extrude", c: true }, { n: "inset" }, { n: "bevel", c: true }, { n: "loop", c: true }, { n: "knife", c: true }, { n: "poly" }, { n: "spin", c: true }, { n: "smooth", c: true }, { n: "slide", c: true }, { n: "shrink", c: true }, { n: "shear", c: true }, { n: "rip", c: true }],
];
const tabs = ["Layout", "Modeling", "Sculpting", "UV Editing", "Texture Paint", "Shading", "Animation", "Rendering", "Compositing", "Geometry Nodes", "Scripting"];
const outlineRows = [
  { l: "Camera", i: "cam", extra: ["teal"] , w: 21, bg: "#2a8a78" },
  { l: "Cube", i: "tri", extra: ["wrenchB", "tealTri"], w: 0, sel: true },
  { l: "Light", i: "bulb", extra: ["sun"], w: 0 },
];
const marks = [20, 40, 60, 80, 100, 120, 140, 160, 180, 200, 220, 240];
const propTabs: { n: string; gap?: number; on?: boolean }[] = [
  { n: "tool", gap: 3 }, { n: "render" }, { n: "output" }, { n: "vlayer" }, { n: "scene" }, { n: "world", gap: 4 },
  { n: "collTab", gap: 3 }, { n: "object" }, { n: "wrench", on: true }, { n: "particle" }, { n: "physics" }, { n: "constraint" }, { n: "dataTab" }, { n: "materialTab" },
];

export default function App() {
  return (
    <Page>
      <Global />
      <Window>
        <TitleBar>
          <Lights>
            <Light $c="#ee5c58" /><Light $c="#e6b13c" /><Light $c="#3bc24f" />
          </Lights>
          <Title>Blender</Title>
          <span />
        </TitleBar>
        <TopBar>
          <Ic n="blender" s={9} />
          <MenuRow $gap={6} $ml={3}>
            <span>File</span><span>Edit</span><span>Render</span><span>Window</span><span>Help</span>
          </MenuRow>
          <Tabs>
            {tabs.map((t, i) => <Tab key={t} $on={i === 0}>{t}</Tab>)}
            <Tab>+</Tab>
          </Tabs>
          <Spacer />
          <Cluster>
            <Ic n="sceneIcon" s={8} /><Chev />
            <Cluster $ml={2}><SceneField $w={55}>Scene</SceneField><SquareBtn><Ic n="copy" s={7} /></SquareBtn><SquareBtn $bg="#3a3a3a"><Ic n="xDim" s={7} /></SquareBtn></Cluster>
            <Cluster $ml={4}><Ic n="viewIcon" s={8} /><Chev /></Cluster>
            <Cluster $ml={2} $mr={4}><SceneField $w={56}>ViewLayer</SceneField><SquareBtn><Ic n="copy" s={7} /></SquareBtn><SquareBtn $bg="#3a3a3a"><Ic n="xDim" s={7} /></SquareBtn></Cluster>
          </Cluster>
        </TopBar>
        <Main>
          <LeftCol>
            <Viewport>
              <Scene />
              <Bar $h={13} $bg="#2e2e2e">
                <Cluster $ml={7}><Ic n="axes" s={9} /><Chev /></Cluster>
                <Drop $w={49} $ml={4}><Ic n="editmode" s={7} /><DropText>Edit Mode</DropText><Chev /></Drop>
                <Cluster $ml={3} $gap={.6}>
                  <SquareBtn $bg="#4772b3" $r="2px 0 0 2px"><Ic n="vertex" s={7} /></SquareBtn>
                  <SquareBtn><Ic n="edge" s={7} /></SquareBtn>
                  <SquareBtn $r="0 2px 2px 0"><Ic n="face" s={7} /></SquareBtn>
                </Cluster>
                <MenuRow $gap={6.200} $ml={4}>
                  <span>View</span><span>Select</span><span>Add</span><span>Mesh</span><span>Vertex</span><span>Edge</span><span>Face</span><span>UV</span>
                </MenuRow>
                <Drop $w={36} $ml={10} $bg="#2a2a2a"><Ic n="global" s={7} /><DropText>Global</DropText><Chev /></Drop>
                <Cluster $ml={4}><Ic n="link" s={8} /><Chev /></Cluster>
                <Cluster $ml={4}><SquareBtn $w={8} $r="2px"><Ic n="magnet" s={7} /></SquareBtn></Cluster>
                <Cluster $ml={3}><Ic n="snapgrid" s={7} /><Chev /></Cluster>
                <Cluster $ml={3}><SquareBtn $w={8} $bg="#454545" $r="2px"><Ic n="circleDot" s={7} /></SquareBtn></Cluster>
                <Cluster $ml={5}><Ic n="curve" s={8} /><Chev c="#6a6a6a" /></Cluster>
                <Spacer />
                <Cluster><Ic n="cursorSm" s={8} /><Chev /></Cluster>
                <Cluster $ml={2}><SquareBtn $w={12} $bg="#4772b3" $r="2px"><Ic n="gizmoToggle" s={7} /></SquareBtn><Chev /></Cluster>
                <Cluster $ml={4}><SquareBtn $w={10} $bg="#4772b3" $r="2px"><Ic n="overlay" s={8} /></SquareBtn><Chev /></Cluster>
                <Cluster $ml={4}><SquareBtn $w={8} $r="2px"><Ic n="xray" s={7} /></SquareBtn></Cluster>
                <Cluster $ml={3} $gap={.5}>
                  <SquareBtn $w={8.500}><Ic n="wire" s={7.500} /></SquareBtn>
                  <SquareBtn $w={8.500} $bg="#4772b3"><Ic n="solid" s={7.500} /></SquareBtn>
                  <SquareBtn $w={8.500}><Ic n="material" s={7.500} /></SquareBtn>
                  <SquareBtn $w={8.500}><Ic n="rendered" s={7.500} /></SquareBtn>
                </Cluster>
                <Cluster $ml={2} $mr={7}><Chev /></Cluster>
              </Bar>
              <Bar $h={10} $bg="#333333">
                <Cluster $ml={21} $gap={.5}>
                  <SquareBtn $w={8.500} $h={8} $bg="#4772b3"><Ic n="sel2" s={7} /></SquareBtn>
                  <SquareBtn $w={8.500} $h={8}><Ic n="sel3" s={7} /></SquareBtn>
                  <SquareBtn $w={8.500} $h={8}><Ic n="sel4" s={7} /></SquareBtn>
                  <SquareBtn $w={8.500} $h={8}><Ic n="sel5" s={7} /></SquareBtn>
                  <SquareBtn $w={8.500} $h={8}><Ic n="sel6" s={7} /></SquareBtn>
                </Cluster>
                <Spacer />
                <Cluster $gap={.6}>
                  <Ic n="cameraview" s={8} />
                  <SquareBtn $w={7.500} $h={8.500} $bg="#505050"><span>X</span></SquareBtn>
                  <SquareBtn $w={7.500} $h={8.500} $bg="#505050"><span>Y</span></SquareBtn>
                  <SquareBtn $w={7.500} $h={8.500} $bg="#505050"><span>Z</span></SquareBtn>
                </Cluster>
                <Cluster $ml={3}><SquareBtn $w={8} $h={8.500} $bg="#505050" $r="2px"><Ic n="sel5" s={6} /></SquareBtn></Cluster>
                <Cluster $ml={4} $mr={4}><OptionsBtn>Options<Chev /></OptionsBtn></Cluster>
              </Bar>
              <Stage>
                <Tools>
                  {toolGroups.map((g, i) => (
                    <ToolGroup key={i}>
                      {g.map(t => <Tool key={t.n} $on={t.on}><Ic n={t.n} s={12} />{t.c && <Corner />}</Tool>)}
                    </ToolGroup>
                  ))}
                </Tools>
                <Info>User Perspective<br />(1) Cube</Info>
                <NavCol>
                  <NavBtn><Ic n="zoom" s={9} /></NavBtn>
                  <NavBtn><Ic n="hand" s={9} /></NavBtn>
                  <NavBtn><Ic n="camera" s={9} /></NavBtn>
                  <NavBtn><Ic n="gridv" s={9} /></NavBtn>
                </NavCol>
              </Stage>
            </Viewport>
            <Timeline>
              <TimeHead>
                <Ic n="clockHead" s={7} /><Chev />
                <Cluster $ml={7} $gap={2}><span>Playback</span><Chev /></Cluster>
                <Cluster $ml={5} $gap={2}><span>Keying</span><Chev /></Cluster>
                <MenuRow $gap={6} $ml={5}><span>View</span><span>Marker</span></MenuRow>
                <Cluster $ml={113}><SquareBtn $w={8} $h={8.500} $r="2px"><Ic n="rec" s={7} /></SquareBtn></Cluster>
                <Cluster $ml={12} $gap={.4}>
                  {["first", "prevKey", "playBack", "play", "nextKey", "last"].map(n => <SquareBtn key={n} $w={8.500} $h={8.500} $bg="#4a4a4a"><Ic n={n} s={6.500} /></SquareBtn>)}
                </Cluster>
                <Spacer />
                <TimeField $w={34}>1</TimeField>
                <Cluster $ml={3}><Ic n="clock" s={8} /></Cluster>
                <TimeField $w={38} $ml={2} $split><span>Start</span><span>1</span></TimeField>
                <TimeField $w={38} $ml={2} $split><span>End</span><span>250</span></TimeField>
                <MouseGap $w={3} />
              </TimeHead>
              <Ruler>
                {marks.map(m => <Mark key={m}>{m}</Mark>)}
                <Handle>1</Handle>
              </Ruler>
              <Scrollbar><Pip /><Pip /></Scrollbar>
              <Playhead />
            </Timeline>
          </LeftCol>
          <RightCol>
            <Outliner>
              <OutHead>
                <Cluster $ml={5}><Ic n="outlinerEd" s={8} /><Chev /></Cluster>
                <Cluster $ml={3}><Ic n="displayEd" s={8} /><Chev /></Cluster>
                <Search $w={50} $ml={14}><Ic n="searchI" s={6} /></Search>
                <Spacer />
                <Cluster><Ic n="filter" s={7} /><Chev /></Cluster>
                <Cluster $ml={2} $mr={3}><SquareBtn $w={9}><Ic n="newCol" s={7} /></SquareBtn></Cluster>
              </OutHead>
              <Row $level={0}><RowSlot><Ic n="coll" s={7} /></RowSlot><RowLabel>Scene Collection</RowLabel></Row>
              <Row $level={1} $stripe>
                <RowSlot><Ic n="arrowD" s={5} /></RowSlot>
                <RowSlot><SquareBtn $w={8} $h={8} $bg="#555" $r="1px"><Ic n="coll" s={6.500} /></SquareBtn></RowSlot>
                <RowLabel>Collection</RowLabel><Spacer />
                <Cluster $gap={3}><Ic n="checked" s={5.500} /><Ic n="eye" s={6.500} /><Ic n="rcam" s={6.500} /></Cluster>
              </Row>
              {outlineRows.map((r, i) => (
                <Row key={r.l} $level={2} $stripe={i === 1}>
                  <RowSlot><Ic n="arrowR" s={5} /></RowSlot>
                  <RowSlot>{r.sel ? <SquareBtn $w={8} $h={8} $bg="#5a5a5a" $r="1px"><Ic n={r.i} s={7} /></SquareBtn> : <Ic n={r.i} s={7} />}</RowSlot>
                  <RowLabel>{r.l}</RowLabel>
                  <Cluster $ml={r.l === "Camera" ? 9 : r.l === "Cube" ? 11 : 10} $gap={.5}>
                    {r.extra.map(e => e === "teal" || e === "tealTri"
                      ? <SquareBtn key={e} $w={9} $h={8} $bg="#1f6e60" $r="2px"><Ic n={e} s={7} /></SquareBtn>
                      : <Ic key={e} n={e} s={7} />)}
                  </Cluster>
                  <Spacer />
                  <Cluster $gap={3}><Ic n="eye" s={6.500} /><Ic n="rcam" s={6.500} /></Cluster>
                </Row>
              ))}
              <TreeLine />
              <ModeMark><Ic n="mode" s={8} /></ModeMark>
            </Outliner>
            <Props>
              <PropHead>
                <Cluster $ml={3}><Ic n="displayEd" s={9} /><Chev /></Cluster>
                <Search $w={48} $ml={36}><Ic n="searchI" s={6.500} /></Search>
                <Spacer />
                <Cluster $mr={4}><SquareBtn $w={7} $h={7} $bg="#383838" $r="2px"><Chev /></SquareBtn></Cluster>
              </PropHead>
              <PropBody>
                <TabCol>
                  {propTabs.map(t => <PropTab key={t.n} $on={t.on} $gap={t.gap}><Ic n={t.n} s={8} /></PropTab>)}
                </TabCol>
                <PropMain>
                  <Crumb>
                    <Ic n="cubeSel" s={7} /><span>&nbsp;Cube&nbsp;&nbsp;</span><Ic n="chevR" s={5} /><Ic n="subsurf" s={8} /><span>&nbsp;Subdivision</span>
                    <Spacer /><Ic n="pin" s={7} />
                  </Crumb>
                  <AddMod><span>Add Modifier</span><Chev /></AddMod>
                  <Panel>
                    <PanelHead>
                      <Chev s={5} />
                      <Cluster $ml={2}><Ic n="subsurf" s={8} /></Cluster>
                      <NameField>Subdivis…</NameField>
                      <Cluster $ml={1}><SquareBtn $w={9} $h={8.500} $bg="#545454" $r="2px 0 0 2px"><Ic n="triDown" s={7} /></SquareBtn></Cluster>
                      <Cluster $ml={1} $gap={.4}>
                        <SquareBtn $w={9.800} $h={8.500} $bg="#4772b3"><Ic n="editCage" s={7} /></SquareBtn>
                        <SquareBtn $w={9.800} $h={8.500} $bg="#4772b3"><Ic n="screen" s={7} /></SquareBtn>
                        <SquareBtn $w={9.800} $h={8.500} $bg="#4772b3"><Ic n="camBlue" s={7} /></SquareBtn>
                      </Cluster>
                      <Cluster $ml={1.500}><Chev s={6} /></Cluster>
                      <Cluster $ml={4}><Ic n="close" s={6} /></Cluster>
                    </PanelHead>
                    <Seg><SegBtn $on>Catmull-Clark</SegBtn><SegBtn>Simple</SegBtn></Seg>
                    <FieldRow $mt={3}><FieldLabel>Levels Viewport</FieldLabel><Num>2</Num><Dot /></FieldRow>
                    <FieldRow><FieldLabel>Render</FieldLabel><Num>2</Num><Dot /></FieldRow>
                    <FieldRow $mt={3.500}>
                      <Check><svg width="5" height="5" viewBox="0 0 8 8"><path d="M1 4 3.200 6.500 7 1.500" fill="none" stroke="#fff" strokeWidth="1.500" /></svg></Check>
                      <CheckLabel>Optimal Display</CheckLabel><Dot />
                    </FieldRow>
                    <Advanced><Ic n="chevR" s={4.500} />Advanced</Advanced>
                  </Panel>
                </PropMain>
              </PropBody>
            </Props>
          </RightCol>
        </Main>
        <Status>
          <Ic n="mouse" s={7} />
          <MouseGap $w={90} />
          <Ic n="mouseMid" s={7} />
          <MouseGap $w={90} />
          <Ic n="mouseR" s={7} />
          <Spacer />
          <span>3.2.1</span>
        </Status>
      </Window>
      <ArrowBox viewBox="0 0 78 272">
        <polygon points="0,53 26,53 26,0 78,136 26,272 26,219 0,219" fill="#595959" />
      </ArrowBox>
      <Picture viewBox="10 3 1035 962"><PicContent /></Picture>
    </Page>
  );
}
